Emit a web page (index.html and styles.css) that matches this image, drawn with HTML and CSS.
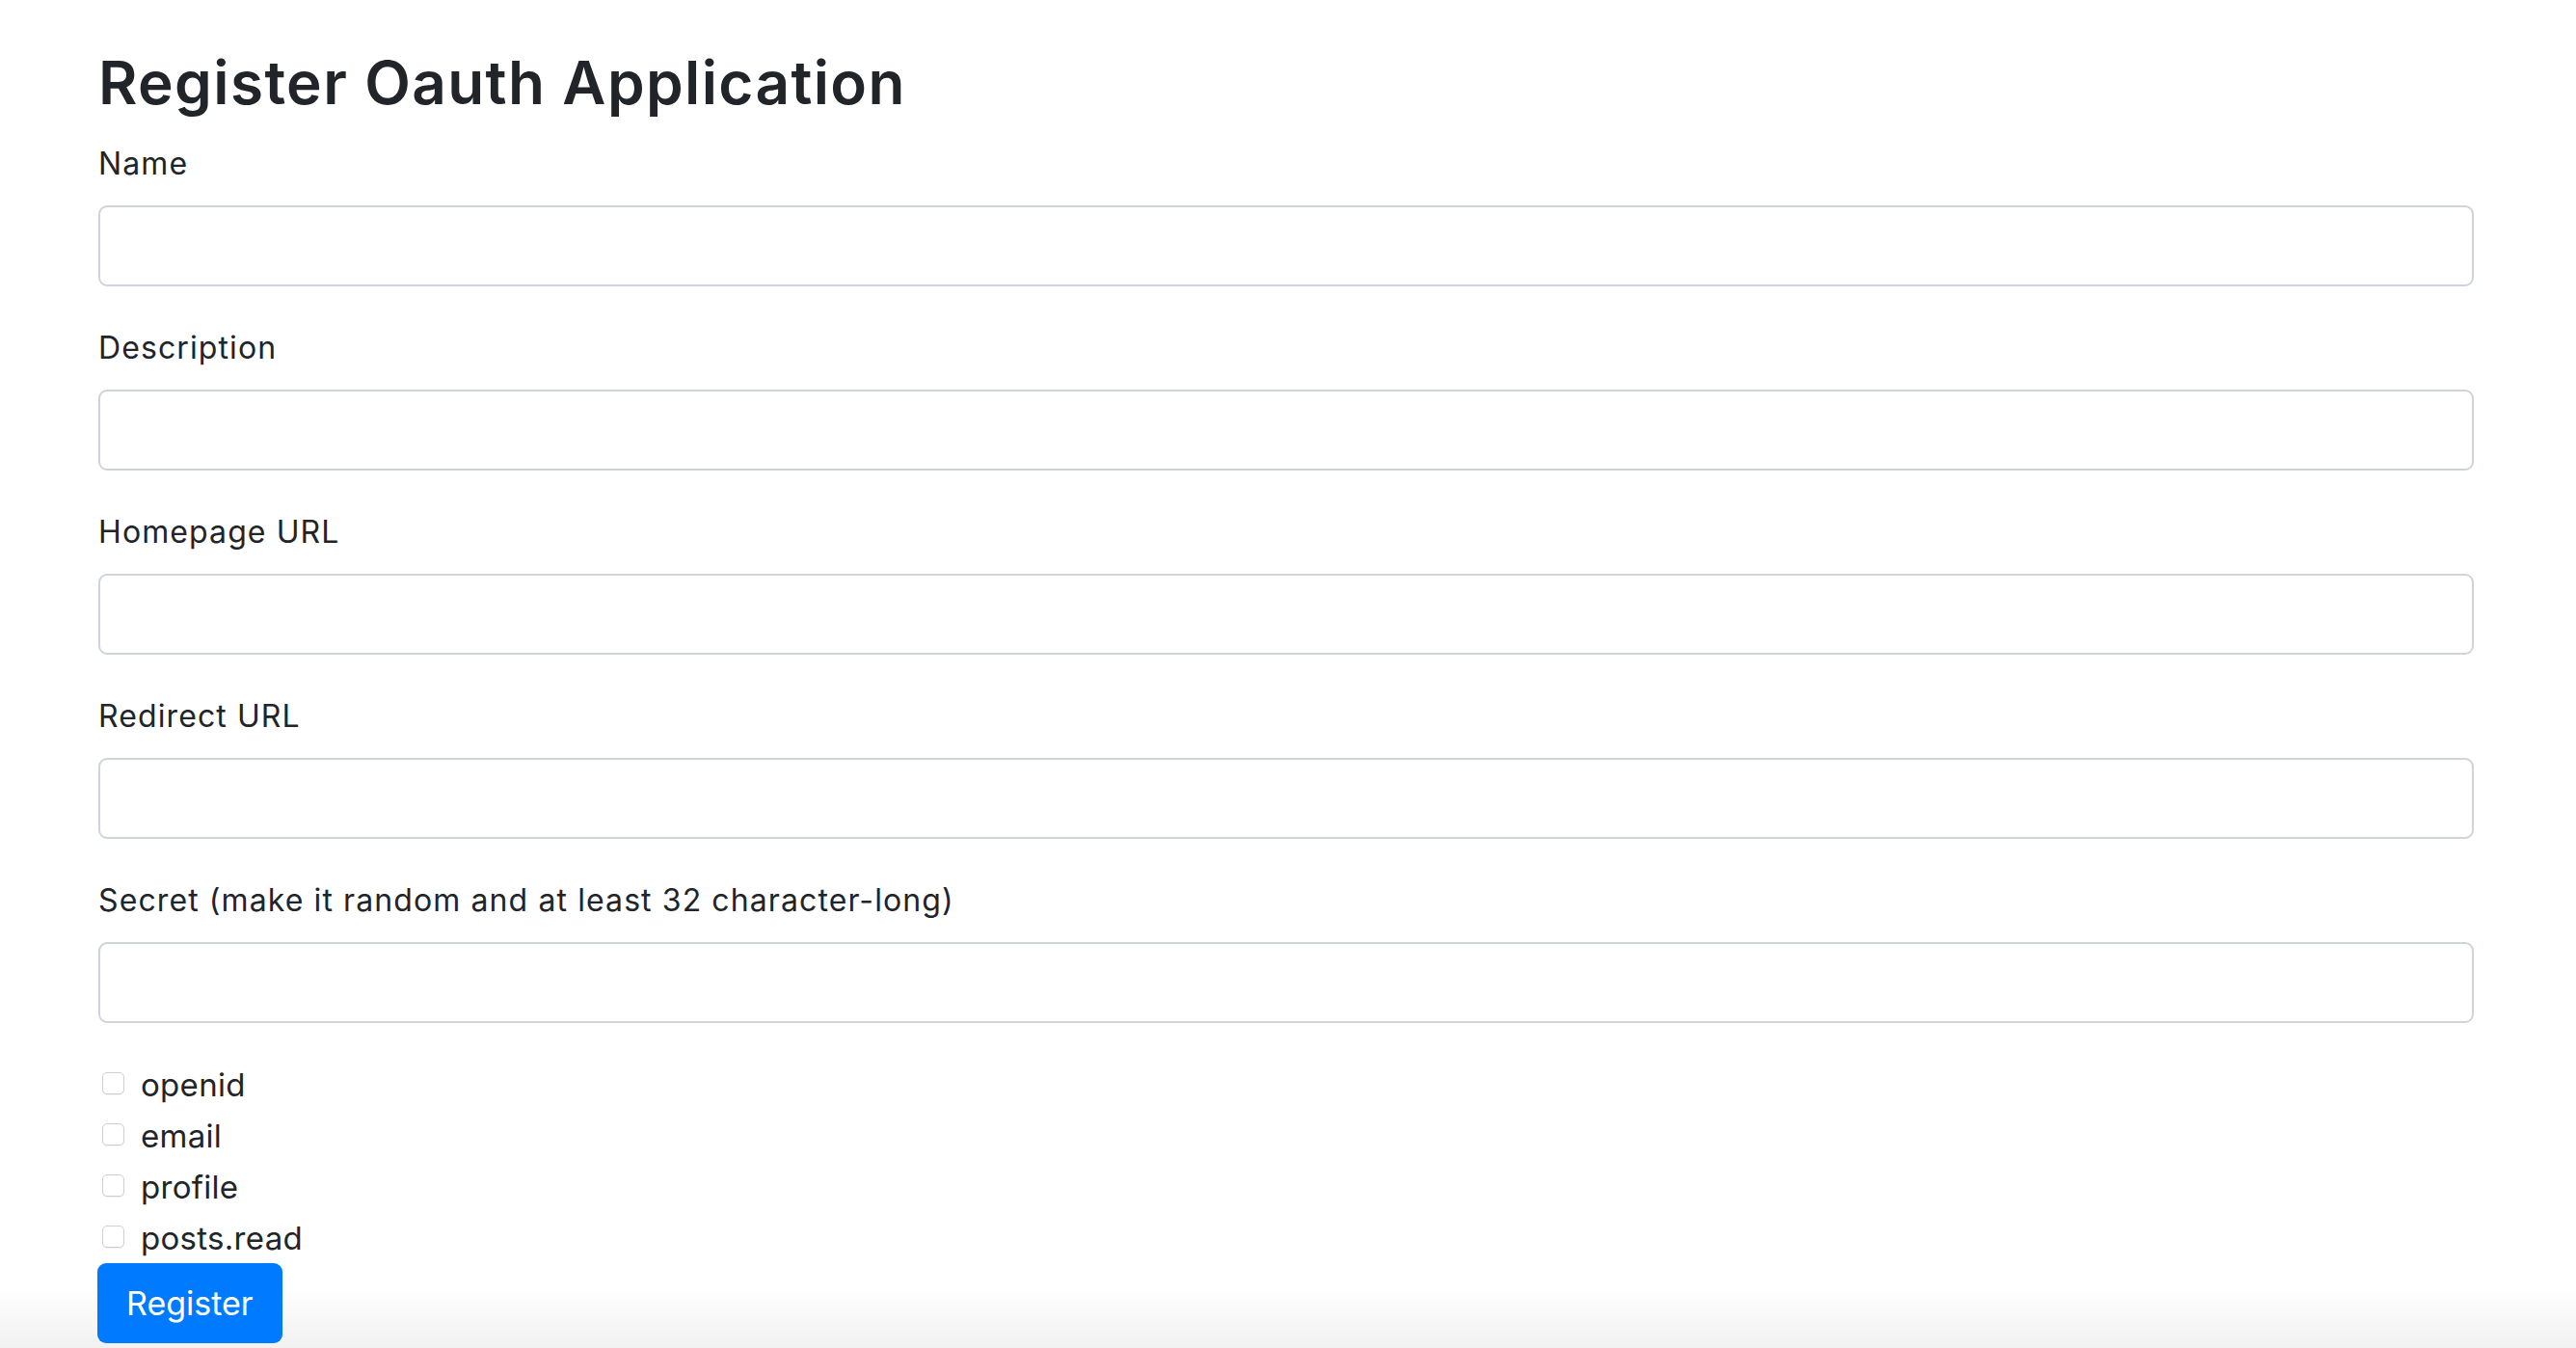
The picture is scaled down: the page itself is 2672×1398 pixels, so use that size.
FILE: index.html
```html
<!DOCTYPE html>
<html lang="en">
<head>
<meta charset="utf-8">
<title>Register Oauth Application</title>
<link rel="stylesheet" href="styles.css">
</head>
<body>
<main class="page">
  <h3 class="title">Register Oauth Application</h3>
  <form class="form">
    <div class="group">
      <label class="label" for="name">Name</label>
      <input class="input" id="name" type="text">
    </div>
    <div class="group">
      <label class="label" for="desc">Description</label>
      <input class="input" id="desc" type="text">
    </div>
    <div class="group">
      <label class="label" for="home">Homepage URL</label>
      <input class="input" id="home" type="text">
    </div>
    <div class="group">
      <label class="label" for="redir">Redirect URL</label>
      <input class="input" id="redir" type="text">
    </div>
    <div class="group">
      <label class="label" for="secret">Secret (make it random and at least 32 character-long)</label>
      <input class="input" id="secret" type="text">
    </div>
    <div class="checks">
      <label class="check"><span class="box"></span>openid</label>
      <label class="check"><span class="box"></span>email</label>
      <label class="check"><span class="box"></span>profile</label>
      <label class="check"><span class="box"></span>posts.read</label>
    </div>
    <button class="btn" type="button">Register</button>
  </form>
</main>
</body>
</html>
```
FILE: styles.css
```css
html, body {
  margin: 0;
  padding: 0;
}
body {
  min-height: 1398px;
  background: linear-gradient(to bottom, #ffffff 0, #ffffff 1335px, #f1f1f1 1398px);
  font-family: Inter, "Liberation Sans", sans-serif;
  color: #212529;
}
.page {
  padding: 49px 106px 0 102px;
}
.title {
  margin: 0 0 21px 0;
  font-size: 62px;
  line-height: 73px;
  font-weight: 600;
  letter-spacing: 1.4px;
}
.form {
  display: flex;
  flex-direction: column;
}
.group {
  display: flex;
  flex-direction: column;
  margin-bottom: 37px;
}
.label {
  font-size: 32px;
  line-height: 53px;
  margin-bottom: 17px;
  letter-spacing: 1.1px;
}
.input {
  box-sizing: border-box;
  height: 84px;
  width: 100%;
  border: 2px solid #ced4da;
  border-radius: 9px;
  background: #fff;
  margin: 0;
}
.checks {
  display: flex;
  flex-direction: column;
  padding-top: 1px;
}
.check {
  display: flex;
  align-items: flex-start;
  font-size: 33px;
  line-height: 53px;
  height: 53px;
  letter-spacing: 0.3px;
}
.box {
  box-sizing: border-box;
  width: 23px;
  height: 23px;
  margin: 13px 17px 0 4px;
  border: 1px solid #cfcfcf;
  border-radius: 5px;
  background: #fff;
  box-shadow: 0 1px 1px rgba(0,0,0,0.06);
}
.btn {
  align-self: flex-start;
  box-sizing: border-box;
  height: 83px;
  padding: 0 30px;
  margin-left: -1px;
  margin-top: -1px;
  border: none;
  border-radius: 9px;
  background: #007bff;
  color: #fff;
  font-family: Inter, "Liberation Sans", sans-serif;
  font-size: 34px;
  line-height: 83px;
}
```
